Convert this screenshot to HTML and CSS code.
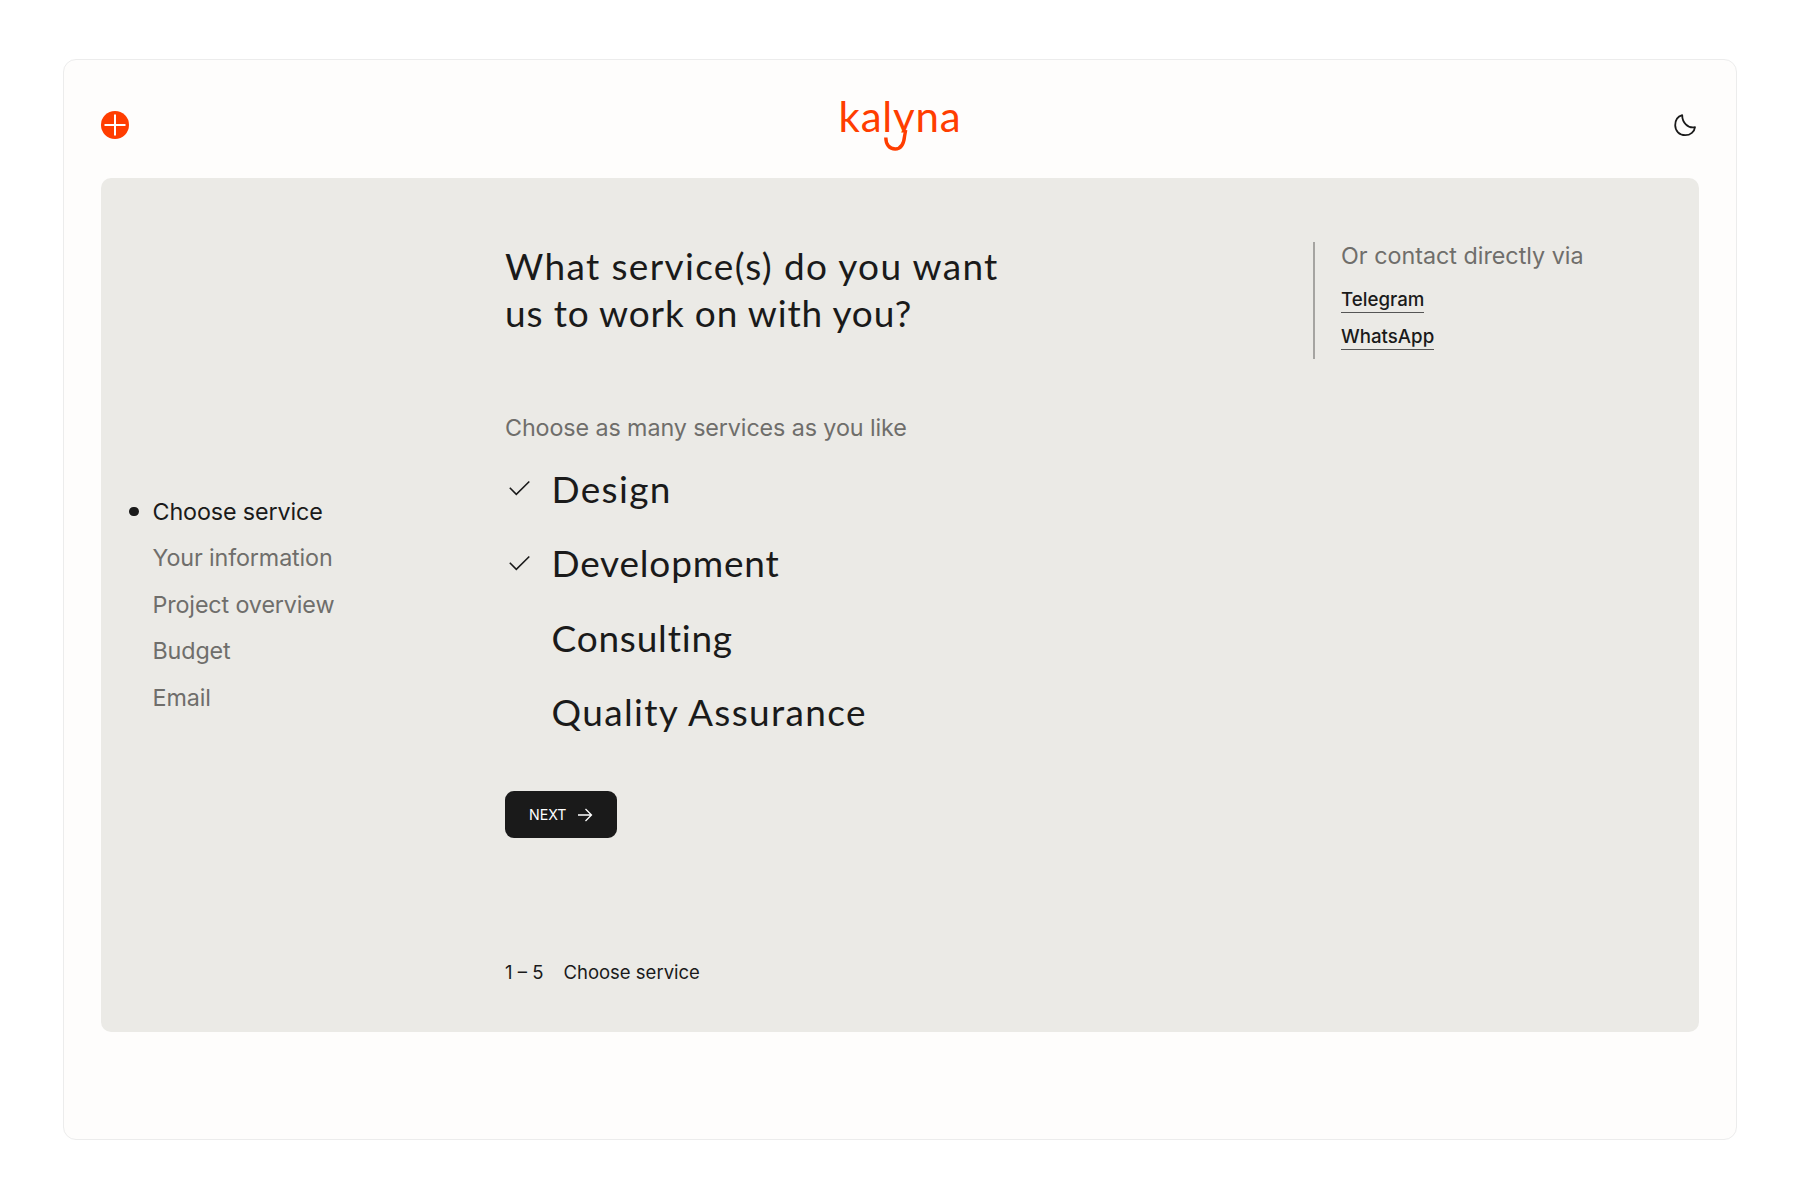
FILE: index.html
```html
<!DOCTYPE html>
<html lang="en">
<head>
    <meta charset="UTF-8">
    <title>kalyna</title>
    <link rel="stylesheet" href="styles.css">
</head>
<body>
    <div class="card">
        <header class="header">
            <svg class="menu-icon" viewBox="0 0 28 28">
                <circle cx="14" cy="14" r="14"/>
                <path d="M14 3.5v21M3.5 14h21"/>
            </svg>
            <div class="logo">
                <span class="logo-text">kalyna</span>
                <svg class="logo-tail" viewBox="0 0 28 26">
                    <path d="M21.7 4L20.6 10C19.8 18 16.5 23 11.2 23C5.4 23 1.8 18.5 1.8 11.5"/>
                </svg>
            </div>
            <svg class="moon-icon" viewBox="0 0 24 24">
                <path d="M9.2 2.2C9.2 9 14.5 15.7 22 14.2C21.5 18.5 17.5 22.2 12.2 22.2C6.3 22.2 2.2 17.8 2.2 12.3C2.2 7.2 5.2 3.4 9.2 2.2Z"/>
            </svg>
        </header>

        <main class="panel">
            <nav class="steps">
                <div class="step active">Choose service</div>
                <div class="step">Your information</div>
                <div class="step">Project overview</div>
                <div class="step">Budget</div>
                <div class="step">Email</div>
            </nav>

            <section class="content">
                <h1><span class="wide">What service(s) do you want</span><br>us to work on with you?</h1>
                <p class="hint">Choose as many services as you like</p>
                <div class="service">
                    <svg class="check" viewBox="0 0 28 28"><path d="M4.8 13.8l6.5 6.5L24.3 7.5"/></svg>
                    <span class="wide">Design</span>
                </div>
                <div class="service">
                    <svg class="check" viewBox="0 0 28 28"><path d="M4.8 13.8l6.5 6.5L24.3 7.5"/></svg>
                    <span>Development</span>
                </div>
                <div class="service">
                    <span class="check"></span>
                    <span>Consulting</span>
                </div>
                <div class="service">
                    <span class="check"></span>
                    <span class="wide">Quality Assurance</span>
                </div>
                <button class="next">
                    <span>NEXT</span>
                    <svg viewBox="0 0 16 14"><path d="M1 7h13.5M8.5 1l6 6-6 6"/></svg>
                </button>
                <div class="progress">
                    <span>1 – 5</span>
                    <span>Choose service</span>
                </div>
            </section>

            <aside class="contact">
                <p>Or contact directly via</p>
                <a>Telegram</a>
                <a>WhatsApp</a>
            </aside>
        </main>
    </div>
</body>
</html>
```
FILE: styles.css
```css
* {
    box-sizing: border-box;
}

body {
    margin: 0;
    padding: 59px 63px 60px;
    height: 1200px;
    background: #fff;
    color: #1a1a1a;
    font-family: Inter, "Liberation Sans", sans-serif;
}

.card {
    height: 1081px;
    padding: 0 37px;
    border: 1px solid #ececec;
    border-radius: 13px;
    background: #fefdfc;
}

.header {
    display: grid;
    grid-template-columns: 1fr auto 1fr;
    align-items: center;
    height: 118px;
    padding-top: 12px;
}

.menu-icon {
    width: 28px;
    height: 28px;
    fill: #ff3d00;
}

.menu-icon path {
    stroke: #fff;
    stroke-width: 2;
}

.logo {
    position: relative;
    margin-top: -19px;
    color: #ff3d00;
    font-family: Lato, sans-serif;
    font-size: 42px;
    line-height: 42px;
    letter-spacing: 0.8px;
}

/* the descender is cut at the baseline, the tail below takes over */
.logo-text {
    display: block;
    clip-path: inset(0 0 4px 0);
}

.logo-tail {
    position: absolute;
    left: 45px;
    top: 31px;
    width: 28px;
    height: 26px;
    fill: none;
    stroke: #ff3d00;
    stroke-width: 3.4;
}

.moon-icon {
    justify-self: end;
    width: 24px;
    height: 24px;
    margin-right: 2px;
    fill: none;
    stroke: #1a1a1a;
    stroke-width: 1.8;
    stroke-linejoin: round;
}

.panel {
    display: grid;
    grid-template-columns: 404px 808px 1fr;
    height: 854px;
    border-radius: 10px;
    background: #ebeae6;
}

.steps {
    align-self: center;
    padding-left: 28px;
    padding-bottom: 1.5px;
}

.step {
    display: flex;
    align-items: center;
    height: 46.5px;
    padding-left: 23.5px;
    color: #6f6e6b;
    font-size: 23.3px;
    letter-spacing: -0.12px;
}

.step.active {
    padding-left: 0;
    color: #1a1a1a;
}

.step.active::before {
    content: "";
    width: 9.5px;
    height: 9.5px;
    margin-right: 14px;
    border-radius: 50%;
    background: #1a1a1a;
}

.content {
    display: flex;
    flex-direction: column;
    align-items: flex-start;
    padding: 64px 0 48px;
}

h1 {
    margin: 0 0 78px;
    font-family: Lato, sans-serif;
    font-size: 37px;
    font-weight: 400;
    line-height: 47px;
    letter-spacing: 0.85px;
}

.hint {
    margin: 0 0 9px;
    color: #6f6e6b;
    font-size: 23.3px;
    line-height: 28px;
    letter-spacing: -0.1px;
}

.service {
    display: flex;
    align-items: center;
    gap: 18.5px;
    height: 74.5px;
    font-family: Lato, sans-serif;
    font-size: 37px;
    letter-spacing: 0.8px;
}

.wide {
    letter-spacing: 1.35px;
}

.check {
    width: 28px;
    height: 28px;
    fill: none;
    stroke: #1a1a1a;
    stroke-width: 1.6;
}

.next {
    display: flex;
    align-items: center;
    justify-content: space-between;
    width: 112px;
    height: 47px;
    margin-top: 42px;
    padding: 0 24px;
    border: none;
    border-radius: 9px;
    background: #1a1a1a;
    color: #fff;
    font-family: inherit;
    font-size: 14.2px;
}

.next svg {
    width: 16px;
    height: 14px;
    fill: none;
    stroke: #fff;
    stroke-width: 1.3;
}

.progress {
    display: flex;
    gap: 20px;
    margin-top: auto;
    font-size: 18.5px;
    line-height: 24px;
}

.contact {
    display: flex;
    flex-direction: column;
    align-items: flex-start;
    height: 117px;
    margin-top: 64px;
    padding-left: 26px;
    border-left: 2px solid #a5a4a1;
}

.contact p {
    margin: 0 0 19px;
    color: #6f6e6b;
    font-size: 23.3px;
    line-height: 28px;
}

.contact a {
    margin-bottom: 13px;
    padding-bottom: 1px;
    border-bottom: 1px solid #555;
    font-size: 18.7px;
    font-weight: 500;
    line-height: 22px;
}
```
